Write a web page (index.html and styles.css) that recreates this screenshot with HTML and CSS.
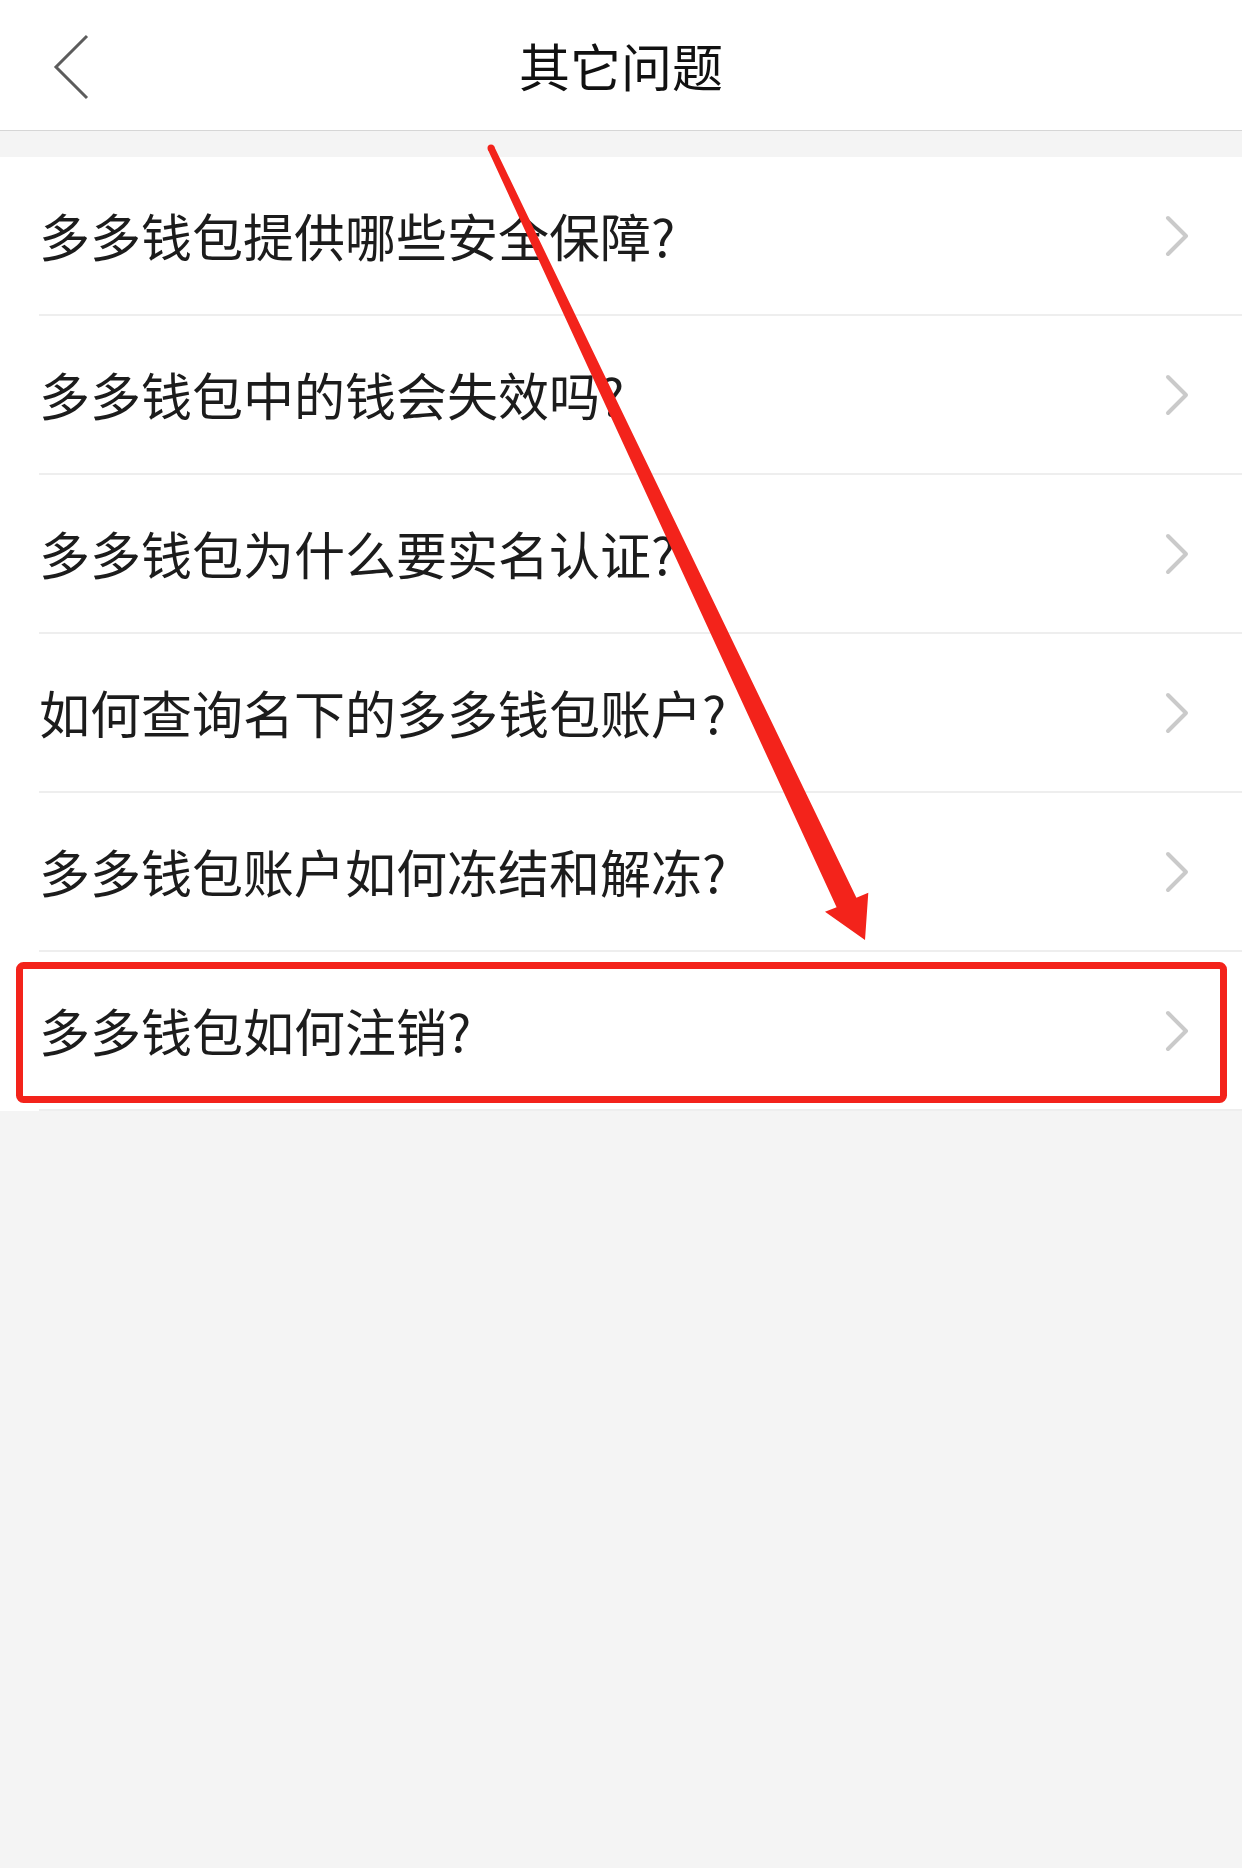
FILE: index.html
```html
<!DOCTYPE html>
<html lang="zh-CN">
<head>
<meta charset="utf-8">
<title>其它问题</title>
<link rel="stylesheet" href="styles.css">
</head>
<body>
<div class="page">
  <header class="nav">
    <span class="back">
      <svg width="40" height="66" viewBox="0 0 40 66"><polyline points="35,2 4,33 35,64" fill="none" stroke="#5c5c5c" stroke-width="3"/></svg>
    </span>
    <h1 class="title">其它问题</h1>
  </header>
  <div class="gap"></div>
  <ul class="list">
    <li class="row"><span class="label">多多钱包提供哪些安全保障?</span><svg class="chev" width="26" height="42" viewBox="0 0 26 42"><polyline points="4,3 22,21 4,39" fill="none" stroke="#cacaca" stroke-width="4" stroke-linecap="round" stroke-linejoin="round"/></svg></li>
    <li class="row"><span class="label">多多钱包中的钱会失效吗?</span><svg class="chev" width="26" height="42" viewBox="0 0 26 42"><polyline points="4,3 22,21 4,39" fill="none" stroke="#cacaca" stroke-width="4" stroke-linecap="round" stroke-linejoin="round"/></svg></li>
    <li class="row"><span class="label">多多钱包为什么要实名认证?</span><svg class="chev" width="26" height="42" viewBox="0 0 26 42"><polyline points="4,3 22,21 4,39" fill="none" stroke="#cacaca" stroke-width="4" stroke-linecap="round" stroke-linejoin="round"/></svg></li>
    <li class="row"><span class="label">如何查询名下的多多钱包账户?</span><svg class="chev" width="26" height="42" viewBox="0 0 26 42"><polyline points="4,3 22,21 4,39" fill="none" stroke="#cacaca" stroke-width="4" stroke-linecap="round" stroke-linejoin="round"/></svg></li>
    <li class="row"><span class="label">多多钱包账户如何冻结和解冻?</span><svg class="chev" width="26" height="42" viewBox="0 0 26 42"><polyline points="4,3 22,21 4,39" fill="none" stroke="#cacaca" stroke-width="4" stroke-linecap="round" stroke-linejoin="round"/></svg></li>
    <li class="row"><span class="label">多多钱包如何注销?</span><svg class="chev" width="26" height="42" viewBox="0 0 26 42"><polyline points="4,3 22,21 4,39" fill="none" stroke="#cacaca" stroke-width="4" stroke-linecap="round" stroke-linejoin="round"/></svg></li>
  </ul>
  <svg class="annot" width="1242" height="1868" viewBox="0 0 1242 1868">
    <rect x="19.5" y="965.5" width="1204" height="134" rx="4" fill="none" stroke="#f3231b" stroke-width="7"/>
    <circle cx="491" cy="148" r="3.5" fill="#f3231b"/>
    <polygon points="494.2,146.5 856.4,897.8 868.3,892.7 865,940 825,911.7 836.6,907.2 487.8,149.5" fill="#f3231b"/>
  </svg>
</div>
</body>
</html>
```
FILE: styles.css
```css
html, body {
  margin: 0;
  padding: 0;
}
body {
  background: #f4f4f4;
  font-family: "Noto Sans CJK SC", "Noto Sans", sans-serif;
  color: #1c1c1c;
}
.page {
  position: relative;
  width: 1242px;
  height: 1868px;
  overflow: hidden;
}
.nav {
  height: 130px;
  background: #fff;
  border-bottom: 1px solid #d6d6d6;
  display: flex;
  align-items: center;
  justify-content: center;
  position: relative;
}
.back {
  position: absolute;
  left: 52px;
  top: 34px;
  display: flex;
}
.title {
  margin: 0;
  font-size: 51px;
  font-weight: 400;
  color: #111;
  line-height: 1;
}
.gap {
  height: 26px;
}
.list {
  list-style: none;
  margin: 0;
  padding: 0;
  background: #fff;
}
.row {
  margin-left: 39px;
  height: 157px;
  border-bottom: 2px solid #eeeeee;
  display: flex;
  align-items: center;
  justify-content: space-between;
  padding-right: 52px;
}
.label {
  font-size: 51px;
  line-height: 1;
  color: #1c1c1c;
}
.chev {
  display: block;
}
.annot {
  position: absolute;
  left: 0;
  top: 0;
  pointer-events: none;
}
```
